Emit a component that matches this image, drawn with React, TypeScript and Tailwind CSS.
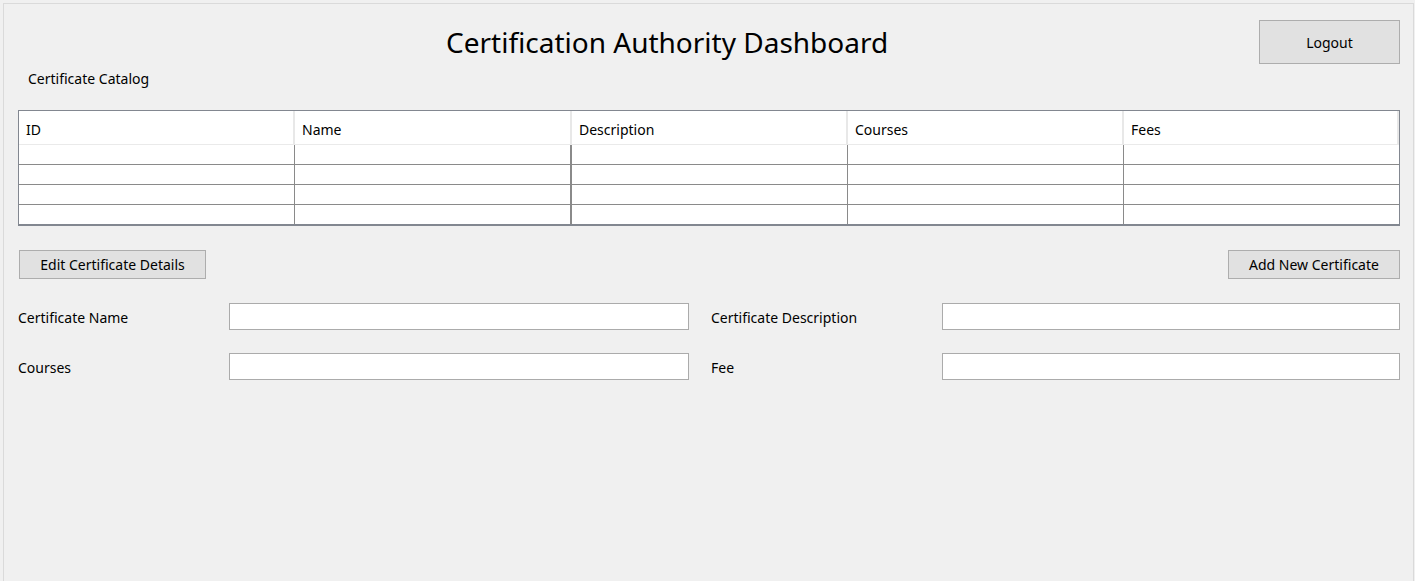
const columns = ["ID", "Name", "Description", "Courses", "Fees"];
const widths = ["w-[276px]", "w-[277px]", "w-[276px]", "w-[276px]", "w-[275px]"];
const rows = [0, 1, 2, 3];

const font = { fontFamily: '"Noto Sans", "Open Sans", sans-serif' };

function Field({ label, labelW, inputW }: { label: string; labelW: string; inputW: string }) {
  return (
    <div className="flex items-center">
      <span className={`${labelW} pt-[2px] text-[14px] leading-[18px]`}>{label}</span>
      <div className={`${inputW} h-[27px] bg-white border border-[#ababab]`} />
    </div>
  );
}

export default function App() {
  return (
    <main
      className="h-[581px] w-[1415px] overflow-hidden bg-[#f0f0f0] pt-[3px] pl-[3px] pr-[1px] text-black"
      style={font}
    >
      <section className="h-full border-t border-l border-r border-[#dadada] pl-[14px] pr-[13px]">
        <div className="flex items-center justify-between mt-[16px] h-[44px]">
          <h1 className="ml-[428px] text-[28px] leading-[44px] font-normal">
            Certification Authority Dashboard
          </h1>
          <button className="w-[141px] h-[44px] bg-[#e1e1e1] border border-[#adadad] text-[14px]">
            Logout
          </button>
        </div>

        <p className="mt-[6px] ml-[10px] text-[14px] leading-[18px]">Certificate Catalog</p>

        <div className="mt-[22px] border border-[#828790] border-b-2 bg-white w-[1382px]">
          <div className="flex h-[34px] border-b border-[#eaeaea]">
            {columns.map((c, i) => (
              <div
                key={c}
                className={`${widths[i]} border-r-2 border-[#e8e8e8] pl-[7px] pt-[3px] flex items-center text-[14px]`}
              >
                {c}
              </div>
            ))}
          </div>
          {rows.map((r) => (
            <div
              key={r}
              className={`flex ${r < 3 ? "h-[20px] border-b border-[#8a8a8a]" : "h-[19px]"}`}
            >
              {columns.map((c, i) => (
                <div
                  key={c}
                  className={`${widths[i]} ${i < 4 ? "border-r border-[#8a8a8a]" : ""} ${i === 1 ? "border-r-2" : ""}`}
                />
              ))}
            </div>
          ))}
        </div>

        <div className="mt-[24px] flex justify-between">
          <button className="ml-px w-[187px] h-[29px] bg-[#e1e1e1] border border-[#adadad] text-[14px]">
            Edit Certificate Details
          </button>
          <button className="w-[172px] h-[29px] bg-[#e1e1e1] border border-[#adadad] text-[14px]">
            Add New Certificate
          </button>
        </div>

        <div className="mt-[24px] flex flex-col gap-[23px]">
          <div className="flex gap-[22px]">
            <Field label="Certificate Name" labelW="w-[211px]" inputW="w-[460px]" />
            <Field label="Certificate Description" labelW="w-[231px]" inputW="w-[458px]" />
          </div>
          <div className="flex gap-[22px]">
            <Field label="Courses" labelW="w-[211px]" inputW="w-[460px]" />
            <Field label="Fee" labelW="w-[231px]" inputW="w-[458px]" />
          </div>
        </div>
      </section>
    </main>
  );
}
